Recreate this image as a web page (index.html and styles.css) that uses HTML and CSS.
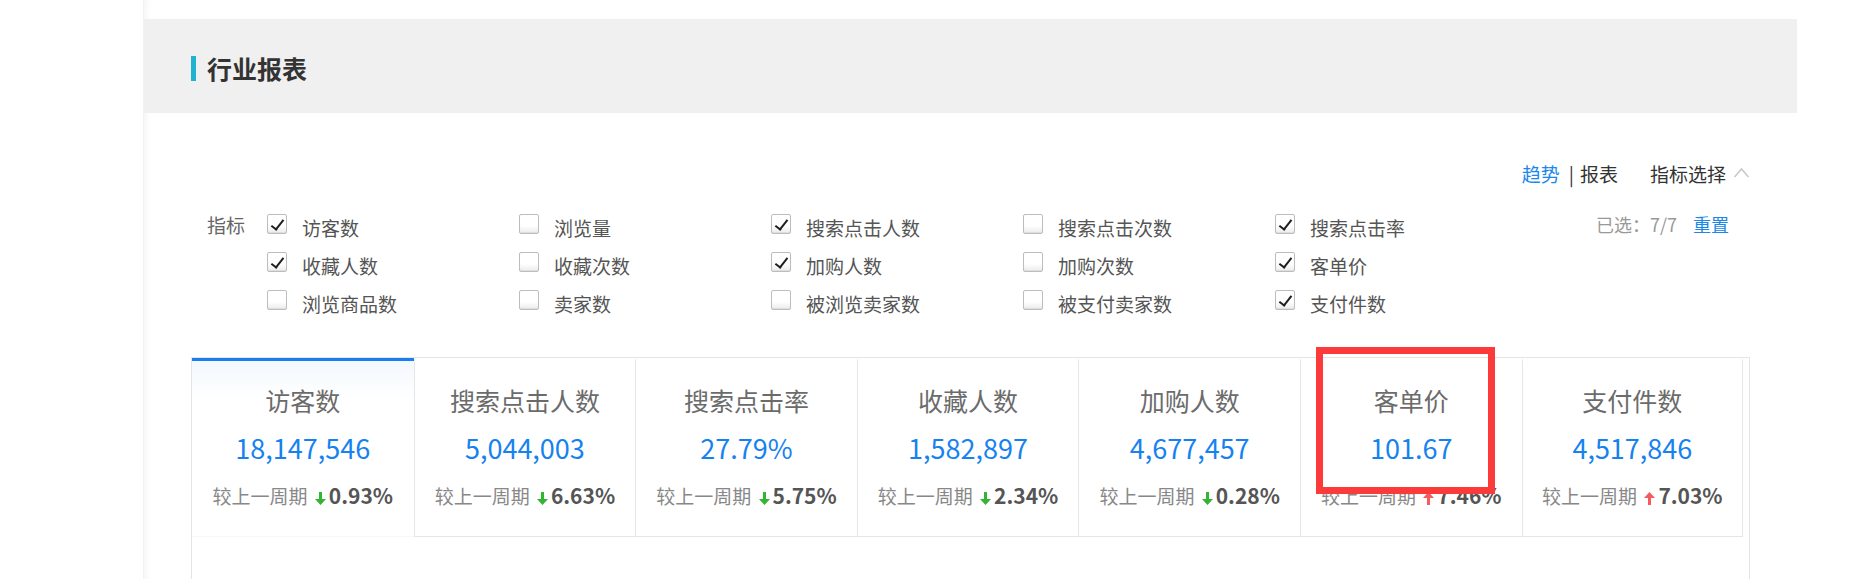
FILE: index.html
```html
<!DOCTYPE html>
<html lang="zh-CN">
<head>
    <meta charset="UTF-8">
    <title>行业报表</title>
    <link rel="stylesheet" href="styles.css">
</head>
<body>
    <div class="page">
        <div class="sidebar"></div>
        <div class="content">
            <div class="header">
                <h1>行业报表</h1>
            </div>
            <div class="report">
                <div class="toolbar">
                    <span class="link">趋势</span><span class="sep">|</span><span>报表</span>
                    <span class="picker">指标选择
                        <svg class="caret" width="17" height="11" viewBox="0 0 17 11"><polyline points="1.5,10 8.5,2 15.5,10" fill="none" stroke="#c9c9c9" stroke-width="1.6"/></svg>
                    </span>
                </div>

                <div class="filter">
                    <div class="filter-label">指标</div>
                    <div class="options">
                        <label class="option"><span class="cb checked"></span>访客数</label>
                        <label class="option"><span class="cb"></span>浏览量</label>
                        <label class="option"><span class="cb checked"></span>搜索点击人数</label>
                        <label class="option"><span class="cb"></span>搜索点击次数</label>
                        <label class="option"><span class="cb checked"></span>搜索点击率</label>
                        <label class="option"><span class="cb checked"></span>收藏人数</label>
                        <label class="option"><span class="cb"></span>收藏次数</label>
                        <label class="option"><span class="cb checked"></span>加购人数</label>
                        <label class="option"><span class="cb"></span>加购次数</label>
                        <label class="option"><span class="cb checked"></span>客单价</label>
                        <label class="option"><span class="cb"></span>浏览商品数</label>
                        <label class="option"><span class="cb"></span>卖家数</label>
                        <label class="option"><span class="cb"></span>被浏览卖家数</label>
                        <label class="option"><span class="cb"></span>被支付卖家数</label>
                        <label class="option"><span class="cb checked"></span>支付件数</label>
                    </div>
                    <div class="selected">已选：7/7<span class="link reset">重置</span></div>
                </div>

                <div class="panel">
                    <div class="cards">
                        <div class="card active">
                            <div class="card-title">访客数</div>
                            <div class="card-value">18,147,546</div>
                            <div class="card-compare">较上一周期 <span class="trend down"><svg width="11" height="13" viewBox="0 0 11 13"><path d="M4 0h3v7h4l-5.5 6L0 7h4z"/></svg>0.93%</span></div>
                        </div>
                        <div class="card">
                            <div class="card-title">搜索点击人数</div>
                            <div class="card-value">5,044,003</div>
                            <div class="card-compare">较上一周期 <span class="trend down"><svg width="11" height="13" viewBox="0 0 11 13"><path d="M4 0h3v7h4l-5.5 6L0 7h4z"/></svg>6.63%</span></div>
                        </div>
                        <div class="card">
                            <div class="card-title">搜索点击率</div>
                            <div class="card-value">27.79%</div>
                            <div class="card-compare">较上一周期 <span class="trend down"><svg width="11" height="13" viewBox="0 0 11 13"><path d="M4 0h3v7h4l-5.5 6L0 7h4z"/></svg>5.75%</span></div>
                        </div>
                        <div class="card">
                            <div class="card-title">收藏人数</div>
                            <div class="card-value">1,582,897</div>
                            <div class="card-compare">较上一周期 <span class="trend down"><svg width="11" height="13" viewBox="0 0 11 13"><path d="M4 0h3v7h4l-5.5 6L0 7h4z"/></svg>2.34%</span></div>
                        </div>
                        <div class="card">
                            <div class="card-title">加购人数</div>
                            <div class="card-value">4,677,457</div>
                            <div class="card-compare">较上一周期 <span class="trend down"><svg width="11" height="13" viewBox="0 0 11 13"><path d="M4 0h3v7h4l-5.5 6L0 7h4z"/></svg>0.28%</span></div>
                        </div>
                        <div class="card">
                            <div class="card-title">客单价</div>
                            <div class="card-value">101.67</div>
                            <div class="card-compare">较上一周期 <span class="trend up"><svg width="11" height="13" viewBox="0 0 11 13"><path d="M4 13h3V6h4L5.5 0 0 6h4z"/></svg>7.46%</span></div>
                        </div>
                        <div class="card">
                            <div class="card-title">支付件数</div>
                            <div class="card-value">4,517,846</div>
                            <div class="card-compare">较上一周期 <span class="trend up"><svg width="11" height="13" viewBox="0 0 11 13"><path d="M4 13h3V6h4L5.5 0 0 6h4z"/></svg>7.03%</span></div>
                        </div>
                    </div>
                    <div class="highlight"></div>
                </div>
            </div>
        </div>
    </div>
</body>
</html>
```

FILE: styles.css
```css
body {
    margin: 0;
    background: #fff;
    font-family: "Noto Sans CJK SC", "Noto Sans", sans-serif;
    color: #333;
    overflow: hidden;
}

.page {
    display: flex;
    height: 579px;
}

.sidebar {
    width: 143px;
    flex: none;
}

.content {
    width: 1654px;
    flex: none;
    padding-top: 19px;
    box-shadow: inset 7px 0 6px -5px rgba(0, 0, 0, 0.05);
    border-left: 1px solid #f2f2f2;
    box-sizing: border-box;
}

.header {
    height: 94px;
    background: #f0f0f0;
    display: flex;
    align-items: center;
    padding-left: 47px;
}

.header h1 {
    margin: 4px 0 0 0;
    font-size: 25px;
    line-height: 30px;
    font-weight: 700;
    color: #333;
    display: flex;
    align-items: center;
}

.header h1::before {
    content: "";
    width: 5px;
    height: 25px;
    background: #1fb3cf;
    margin-right: 11px;
}

.report {
    padding: 0 47px;
}

.toolbar {
    display: flex;
    justify-content: flex-end;
    align-items: center;
    margin-top: 47px;
    font-size: 19px;
    line-height: 28px;
    color: #333;
}

.link {
    color: #1a88ea;
}

.sep {
    margin: 0 6px 0 9px;
}

.picker {
    margin-left: 32px;
    display: flex;
    align-items: center;
}

.caret {
    margin-left: 7px;
    margin-top: -4px;
}

.filter {
    display: flex;
    margin-top: 21px;
}

.filter-label {
    width: 60px;
    padding-left: 16px;
    font-size: 19px;
    line-height: 32px;
    color: #666;
}

.options {
    display: grid;
    grid-template-columns: repeat(5, 252px);
    grid-auto-rows: 38px;
}

.option {
    display: flex;
    align-items: flex-start;
    font-size: 19px;
    line-height: 38px;
    color: #555;
}

.cb {
    width: 18px;
    height: 18px;
    margin: 5px 15px 0 0;
    border: 1px solid #bdbdbd;
    border-radius: 2px;
    background: linear-gradient(#fff 60%, #ececec);
    box-shadow: inset 0 -1px 1px rgba(0, 0, 0, 0.07);
    position: relative;
}

.cb.checked::after {
    content: "";
    position: absolute;
    left: 6px;
    top: 2px;
    width: 5px;
    height: 11px;
    border: solid #1e1e1e;
    border-width: 0 2.8px 2.8px 0;
    transform: rotate(38deg);
}

.selected {
    margin-left: auto;
    margin-right: 21px;
    font-size: 18px;
    line-height: 30px;
    color: #999;
}

.reset {
    margin-left: 16px;
}

.panel {
    position: relative;
    margin-top: 34px;
    border: 1px solid #e4e4e4;
    border-bottom: none;
    height: 222px;
}

.cards {
    display: grid;
    grid-template-columns: repeat(7, 221.6px);
}

.card {
    height: 179px;
    box-sizing: border-box;
    border-top: 3px solid transparent;
    border-left: 1px solid #e6e6e6;
    border-bottom: 1px solid #e6e6e6;
    text-align: center;
    padding-top: 22px;
}

.card:first-child {
    border-left: none;
}

.card:last-child {
    border-right: 1px solid #e6e6e6;
}

.card.active {
    border-top-color: #1a7fee;
    border-bottom-color: transparent;
    background: linear-gradient(#f2f8fe, #fff 38px);
}

.card-title {
    font-size: 25px;
    line-height: 34px;
    color: #6b6b6b;
}

.card-value {
    margin-top: 11px;
    font-size: 27px;
    line-height: 40px;
    color: #1682ef;
}

.card-compare {
    margin-top: 13px;
    font-size: 19px;
    line-height: 28px;
    color: #888;
}

.trend {
    font-weight: 700;
    font-size: 21px;
    color: #555;
    margin-left: 3px;
}

.trend svg {
    margin-right: 3px;
    vertical-align: -1px;
}

.trend.down svg {
    fill: #33b533;
}

.trend.up svg {
    fill: #f65b5b;
}

.highlight {
    position: absolute;
    left: 1124px;
    top: -11px;
    width: 179px;
    height: 147px;
    box-sizing: border-box;
    border: 7px solid #fc3a3a;
}
```
